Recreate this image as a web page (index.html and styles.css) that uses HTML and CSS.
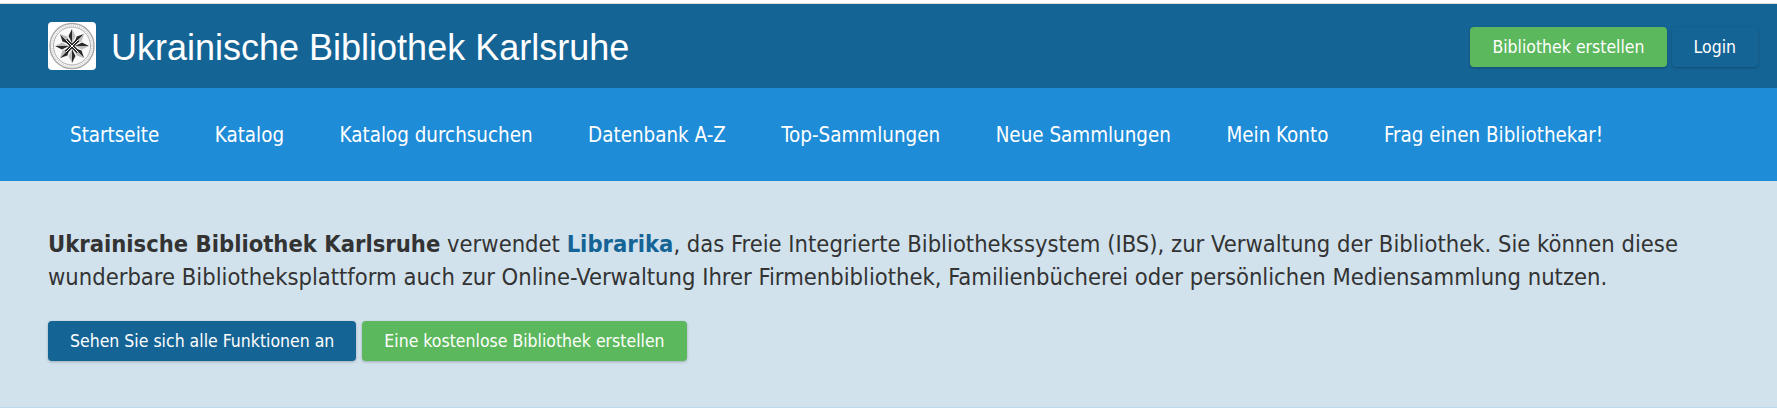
FILE: index.html
```html
<html>
<head>
  <meta charset="utf-8">
  <link rel="stylesheet" href="styles.css">
</head>
<body>
  <div class="header">
    <a class="brand" href="#">
      <svg class="logo" viewBox="0 0 48 48">
        <defs>
          <g id="petal">
            <path d="M24 7l-3.500 7 3.500 7z" fill="#2a2a2a"/>
            <path d="M24 7l3.500 7-3.500 7z" fill="#bdbdbd"/>
          </g>
        </defs>
        <rect width="48" height="48" rx="4" fill="#fff"/>
        <ellipse cx="24" cy="24" rx="22" ry="22.500" fill="none" stroke="#aaa" stroke-width="1.500"/>
        <ellipse cx="24" cy="24" rx="20" ry="20.500" fill="none" stroke="#ccc" stroke-width="1.500" stroke-dasharray="1 1"/>
        <ellipse cx="24" cy="24" rx="18.500" ry="19" fill="#fafafa" stroke="#999" stroke-width="0.800"/>
        <use href="#petal"/>
        <use href="#petal" transform="rotate(45 24 24)"/>
        <use href="#petal" transform="rotate(90 24 24)"/>
        <use href="#petal" transform="rotate(135 24 24)"/>
        <use href="#petal" transform="rotate(180 24 24)"/>
        <use href="#petal" transform="rotate(225 24 24)"/>
        <use href="#petal" transform="rotate(270 24 24)"/>
        <use href="#petal" transform="rotate(315 24 24)"/>
        <path d="M18 18l12 12M30 18L18 30" stroke="#222" stroke-width="3.500"/>
        <path d="M18 18l12 12M30 18L18 30" stroke="#fff" stroke-width="1"/>
      </svg>
      <span class="brand-name">Ukrainische Bibliothek Karlsruhe</span>
    </a>
    <div class="header-btns">
      <a class="btn btn-green" href="#">Bibliothek erstellen</a>
      <a class="btn btn-blue" href="#">Login</a>
    </div>
  </div>
  <div class="nav">
    <a href="#">Startseite</a>
    <a href="#">Katalog</a>
    <a href="#">Katalog durchsuchen</a>
    <a href="#">Datenbank A-Z</a>
    <a href="#">Top-Sammlungen</a>
    <a href="#">Neue Sammlungen</a>
    <a href="#">Mein Konto</a>
    <a href="#">Frag einen Bibliothekar!</a>
  </div>
  <div class="intro">
    <p><b>Ukrainische Bibliothek Karlsruhe</b> verwendet <a href="#">Librarika</a>, das Freie Integrierte Bibliothekssystem (IBS), zur Verwaltung der Bibliothek. Sie können diese wunderbare Bibliotheksplattform auch zur Online-Verwaltung Ihrer Firmenbibliothek, Familienbücherei oder persönlichen Mediensammlung nutzen.</p>
    <div class="intro-btns">
      <a class="btn btn-blue" href="#">Sehen Sie sich alle Funktionen an</a>
      <a class="btn btn-green" href="#">Eine kostenlose Bibliothek erstellen</a>
    </div>
  </div>
</body>
</html>
```

FILE: styles.css
```css
html, body {
  margin: 0;
  padding: 0;
  font-family: "DejaVu Sans", sans-serif;
  font-stretch: condensed;
  color: #333;
  background: #fff;
}
a {
  text-decoration: none;
}
.header {
  display: flex;
  justify-content: space-between;
  align-items: center;
  height: 84px;
  margin-top: 4px;
  padding: 0 19px 0 48px;
  background: #156496;
  box-shadow: 0 -1px 0 #ddd;
}
.brand {
  display: flex;
  align-items: center;
  gap: 15px;
  color: #fff;
}
.logo {
  width: 48px;
  height: 48px;
}
.brand-name {
  padding-top: 3px;
  font-family: "Liberation Sans", Arial, sans-serif;
  font-stretch: normal;
  font-size: 36px;
}
.header-btns {
  display: flex;
  gap: 5px;
  padding-top: 2px;
}
.btn {
  display: block;
  height: 40px;
  line-height: 40px;
  padding: 0 22px;
  border-radius: 4px;
  font-size: 17.500px;
  color: #fff;
  box-shadow: 0 1px 3px rgba(0, 0, 0, 0.25);
}
.btn-green {
  background: #5cb85c;
}
.btn-blue {
  background: #156496;
}
.nav {
  display: flex;
  gap: 55.500px;
  height: 93px;
  padding: 1px 70px 0;
  box-sizing: border-box;
  align-items: center;
  background: #1e8cd7;
}
.nav a {
  color: #fff;
  font-size: 20.400px;
}
.intro {
  height: 226px;
  padding: 0 48px;
  background: #d1e2ed;
  border-bottom: 1px solid #b9d9ef;
  overflow: hidden;
}
.intro p {
  margin: 47px 0 27px;
  font-size: 23.550px;
  line-height: 33px;
}
.intro p a {
  color: #156496;
  font-weight: bold;
}
.intro-btns {
  display: flex;
  gap: 6px;
}
```
